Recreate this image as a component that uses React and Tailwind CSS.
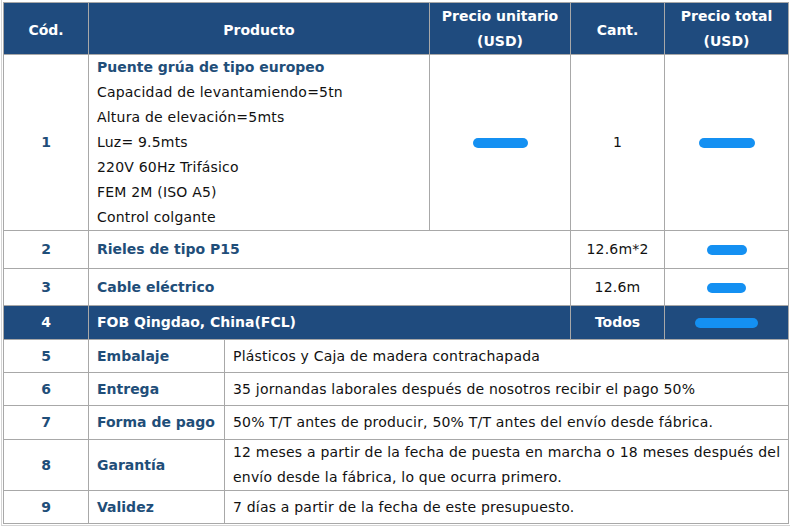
const BLUE = 'bg-[#1f4b7e]'

function Pill({ w }) {
  return (
    <span
      className="inline-block h-[10px] rounded-full bg-[#1490f2] align-middle"
      style={{ width: w }}
    />
  )
}

const cell = 'border border-[#a8a8a8] px-2 leading-[25px]'
const text = `${cell} tracking-[0.2px]`
const num = `${cell} text-center font-bold text-[#1f4e79]`
const label = `${cell} font-bold text-[#1f4e79]`
const head = `${cell} text-center font-bold text-white`

export default function App() {
  return (
    <div className="min-h-screen bg-white text-[14px] text-[#111]" style={{ fontFamily: '"DejaVu Sans", Verdana, sans-serif' }}>
      <div className="ml-[1px] w-[789px] border-l border-b border-[#d4d4d4] pl-[1px] pt-[2px] pb-[1px]">
        <table className="w-[785px] table-fixed border-collapse">
          <colgroup>
            <col className="w-[85px]" />
            <col className="w-[136px]" />
            <col className="w-[205px]" />
            <col className="w-[141px]" />
            <col className="w-[94px]" />
            <col className="w-[124px]" />
          </colgroup>
          <tbody>
            <tr className={BLUE}>
              <td className={`${head} h-[52px] pt-[4px]`}>Cód.</td>
              <td className={`${head} pt-[4px]`} colSpan={2}>Producto</td>
              <td className={head}>Precio unitario<br />(USD)</td>
              <td className={`${head} pt-[4px]`}>Cant.</td>
              <td className={head}>Precio total<br />(USD)</td>
            </tr>
            <tr>
              <td className={`${num} h-[176px]`}>1</td>
              <td className={text} colSpan={2}>
                <div className="font-bold tracking-normal text-[#1f4e79]">Puente grúa de tipo europeo</div>
                <div>Capacidad de levantamiendo=5tn</div>
                <div>Altura de elevación=5mts</div>
                <div>Luz= 9.5mts</div>
                <div>220V 60Hz Trifásico</div>
                <div>FEM 2M (ISO A5)</div>
                <div>Control colgante</div>
              </td>
              <td className={`${cell} text-center`}><Pill w={55} /></td>
              <td className={`${text} text-center`}>1</td>
              <td className={`${cell} text-center`}><Pill w={56} /></td>
            </tr>
            <tr>
              <td className={`${num} h-[38px]`}>2</td>
              <td className={label} colSpan={3}>Rieles de tipo P15</td>
              <td className={`${text} text-center`}>12.6m*2</td>
              <td className={`${cell} text-center`}><Pill w={40} /></td>
            </tr>
            <tr>
              <td className={`${num} h-[37px]`}>3</td>
              <td className={label} colSpan={3}>Cable eléctrico</td>
              <td className={`${text} text-center`}>12.6m</td>
              <td className={`${cell} text-center`}><Pill w={39} /></td>
            </tr>
            <tr className={BLUE}>
              <td className={`${head} h-[34px]`}>4</td>
              <td className={`${cell} font-bold text-white`} colSpan={3}>FOB Qingdao, China(FCL)</td>
              <td className={head}>Todos</td>
              <td className={head}><Pill w={63} /></td>
            </tr>
            <tr>
              <td className={`${num} h-[33px]`}>5</td>
              <td className={label}>Embalaje</td>
              <td className={text} colSpan={4}>Plásticos y Caja de madera contrachapada</td>
            </tr>
            <tr>
              <td className={`${num} h-[33px]`}>6</td>
              <td className={label}>Entrega</td>
              <td className={text} colSpan={4}>35 jornandas laborales después de nosotros recibir el pago 50%</td>
            </tr>
            <tr>
              <td className={`${num} h-[34px]`}>7</td>
              <td className={label}>Forma de pago</td>
              <td className={text} colSpan={4}>50% T/T antes de producir, 50% T/T antes del envío desde fábrica.</td>
            </tr>
            <tr>
              <td className={`${num} h-[50px]`}>8</td>
              <td className={label}>Garantía</td>
              <td className={`${text} whitespace-nowrap`} colSpan={4}>12 meses a partir de la fecha de puesta en marcha o 18 meses después del<br />envío desde la fábrica, lo que ocurra primero.</td>
            </tr>
            <tr>
              <td className={`${num} h-[33px]`}>9</td>
              <td className={label}>Validez</td>
              <td className={text} colSpan={4}>7 días a partir de la fecha de este presupuesto.</td>
            </tr>
          </tbody>
        </table>
      </div>
    </div>
  )
}
